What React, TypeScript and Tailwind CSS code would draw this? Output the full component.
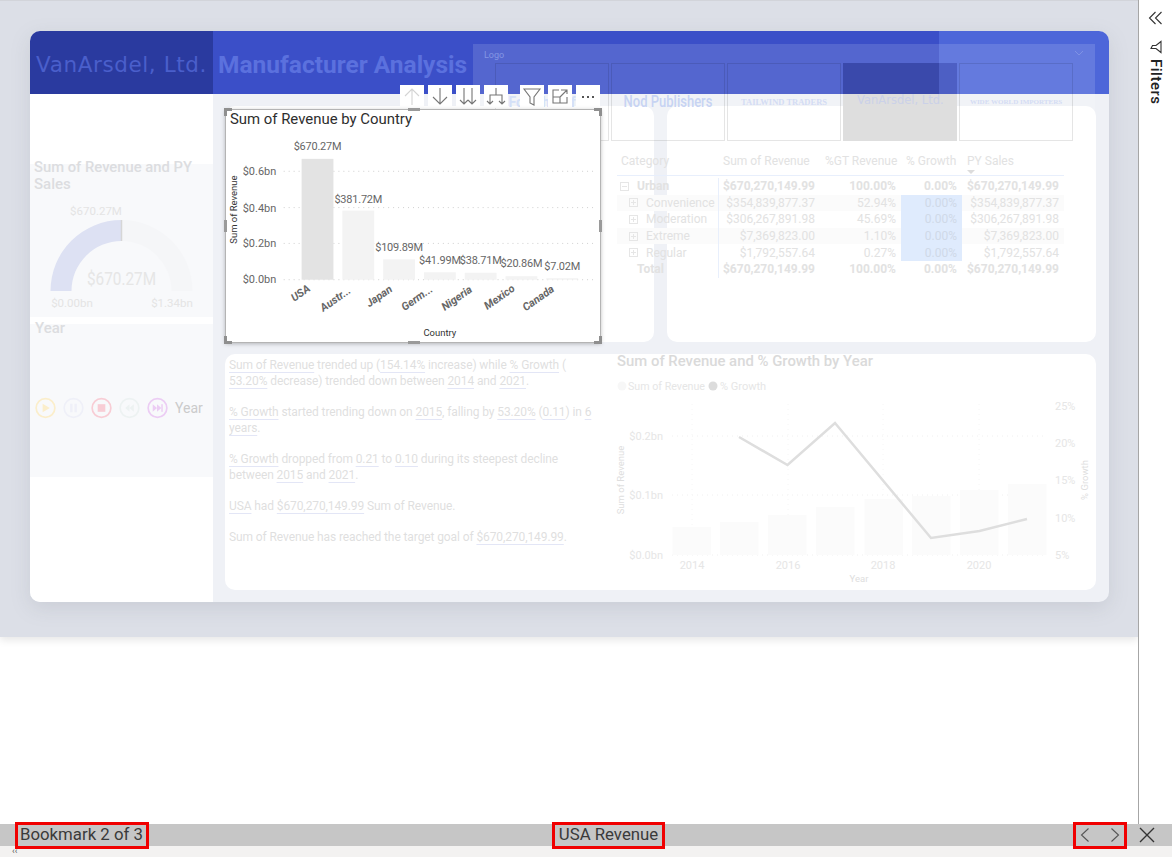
import React from 'react';

const countries = [
  { name: 'USA', x: 301, top: 158, fill: '#e3e3e3', label: '$670.27M', ly: 145, lx: 317, tx: 302, ty: 293 },
  { name: 'Austr...', x: 342, top: 210, fill: '#f3f3f3', label: '$381.72M', ly: 198, lx: 358, tx: 337, ty: 299 },
  { name: 'Japan', x: 383, top: 259, fill: '#f3f3f3', label: '$109.89M', ly: 247, lx: 399, tx: 381, ty: 296 },
  { name: 'Germ...', x: 424, top: 272, fill: '#f3f3f3', label: '$41.99M', ly: 260, lx: 440, tx: 419, ty: 298 },
  { name: 'Nigeria', x: 465, top: 272.5, fill: '#f3f3f3', label: '$38.71M', ly: 260, lx: 481, tx: 459, ty: 298 },
  { name: 'Mexico', x: 506, top: 276, fill: '#f3f3f3', label: '$20.86M', ly: 263, lx: 522, tx: 502, ty: 297 },
  { name: 'Canada', x: 547, top: 278, fill: '#f3f3f3', label: '$7.02M', ly: 266, lx: 563, tx: 541, ty: 298 },
];

const yearBars = [
  [672.5, 527], [720, 522], [768, 515], [816, 507], [864.5, 499], [912, 496], [960, 490], [1008, 484],
];

const matrixRows = [
  { name: 'Urban', rev: '$670,270,149.99', gt: '100.00%', growth: '0.00%', py: '$670,270,149.99', bold: true, icon: '-', depth: 0 },
  { name: 'Convenience', rev: '$354,839,877.37', gt: '52.94%', growth: '0.00%', py: '$354,839,877.37', icon: '+', depth: 1, stripe: true },
  { name: 'Moderation', rev: '$306,267,891.98', gt: '45.69%', growth: '0.00%', py: '$306,267,891.98', icon: '+', depth: 1 },
  { name: 'Extreme', rev: '$7,369,823.00', gt: '1.10%', growth: '0.00%', py: '$7,369,823.00', icon: '+', depth: 1, stripe: true },
  { name: 'Regular', rev: '$1,792,557.64', gt: '0.27%', growth: '0.00%', py: '$1,792,557.64', icon: '+', depth: 1 },
  { name: 'Total', rev: '$670,270,149.99', gt: '100.00%', growth: '0.00%', py: '$670,270,149.99', bold: true, depth: 0 },
];

function U({ children }: { children: React.ReactNode }) {
  return <span className="underline decoration-[#e3e6f6] underline-offset-[3px]">{children}</span>;
}

function SumChart() {
  return (
    <svg viewBox="225 109 376 233" className="block w-full h-full font-['Roboto',sans-serif]">
      <text x="229" y="123" fontSize="15" fill="#2e2e2e" textLength="183" lengthAdjust="spacingAndGlyphs">Sum of Revenue by Country</text>
      {[170.5, 207, 243, 279.5].map((y) => (
        <line key={y} x1="283" x2="597" y1={y} y2={y} stroke="#cfcfcf" strokeWidth="1" strokeDasharray="1 4" />
      ))}
      {[['$0.6bn', 170], ['$0.4bn', 207], ['$0.2bn', 243], ['$0.0bn', 279]].map(([t, y]) => (
        <text key={t} x="275.5" y={Number(y) + 4} textAnchor="end" fontSize="11" fill="#666">{t}</text>
      ))}
      <text transform="translate(236 209) rotate(-90)" textAnchor="middle" fontSize="9.5" fill="#333">Sum of Revenue</text>
      {countries.map((c) => (
        <g key={c.name}>
          <rect x={c.x} y={c.top} width="32" height={279.5 - c.top} fill={c.fill} />
          <text x={c.lx} y={c.ly + 4} textAnchor="middle" fontSize="11" fill="#666" letterSpacing="-0.2">{c.label}</text>
          <text transform={`translate(${c.tx} ${c.ty + 3}) rotate(-35)`} textAnchor="middle" fontSize="11" fontWeight="700" fontStyle="italic" fill="#666">{c.name}</text>
        </g>
      ))}
      <text x="440" y="336" textAnchor="middle" fontSize="9.5" fill="#333">Country</text>
    </svg>
  );
}

function YearChart() {
  return (
    <svg viewBox="617 354 479 236" className="block w-[479px] h-[236px] shrink-0 overflow-visible font-['Roboto',sans-serif]">
      <text x="617" y="366" fontSize="15" fontWeight="500" fill="#dadada" textLength="256" lengthAdjust="spacingAndGlyphs">Sum of Revenue and % Growth by Year</text>
      <circle cx="622" cy="386" r="4.5" fill="#f7f7f7" />
      <text x="628" y="390" fontSize="11" fill="#e6e6e6" textLength="77" lengthAdjust="spacingAndGlyphs">Sum of Revenue</text>
      <circle cx="713" cy="386" r="4.5" fill="#dcdcdc" />
      <text x="720" y="390" fontSize="11" fill="#e6e6e6">% Growth</text>
      {[436, 495, 555].map((y) => (
        <line key={y} x1="672" x2="1046" y1={y} y2={y} stroke="#f0f0f0" strokeDasharray="1 4" />
      ))}
      {[692, 788, 883, 979].map((x) => (
        <line key={x} x1={x} x2={x} y1="404" y2="555" stroke="#f6f6f6" strokeDasharray="1 4" />
      ))}
      {yearBars.map(([x, y]) => (
        <rect key={x} x={x} y={y} width="38.5" height={555 - y} fill="#fbfbfb" />
      ))}
      <polyline points="739,437 787.5,465 835,423 931,538 979.5,531 1027,519" fill="none" stroke="#dedede" strokeWidth="2.5" />
      {[['$0.2bn', 436], ['$0.1bn', 495], ['$0.0bn', 555]].map(([t, y]) => (
        <text key={t} x="663" y={Number(y) + 4} textAnchor="end" fontSize="11" fill="#e6e6e6">{t}</text>
      ))}
      {[['25%', 406], ['20%', 443], ['15%', 480], ['10%', 518], ['5%', 555]].map(([t, y]) => (
        <text key={t} x="1055" y={Number(y) + 4} fontSize="11" fill="#e6e6e6">{t}</text>
      ))}
      {[['2014', 692], ['2016', 788], ['2018', 883], ['2020', 979]].map(([t, x]) => (
        <text key={t} x={x} y="569" textAnchor="middle" fontSize="11" fill="#e6e6e6">{t}</text>
      ))}
      <text x="859" y="582" textAnchor="middle" fontSize="9.5" fill="#dedede">Year</text>
      <text transform="translate(624 480) rotate(-90)" textAnchor="middle" fontSize="9.5" fill="#dedede">Sum of Revenue</text>
      <text transform="translate(1088 480) rotate(-90)" textAnchor="middle" fontSize="9.5" fill="#dedede">% Growth</text>
    </svg>
  );
}

function Gauge() {
  return (
    <svg viewBox="30 164 183 153" className="block w-[183px] h-[153px] overflow-visible font-['Roboto',sans-serif]">
      <text x="34" y="172" fontSize="15" fontWeight="500" fill="#dcdde0" textLength="158" lengthAdjust="spacingAndGlyphs">Sum of Revenue and PY</text>
      <text x="34" y="189" fontSize="15" fontWeight="500" fill="#dcdde0">Sales</text>
      <path d="M121.5 220 A71 71 0 0 1 192.5 291 L171.5 291 A50 50 0 0 0 121.5 241 Z" fill="#f5f6f8" />
      <path d="M50.5 291 A71 71 0 0 1 121.5 220 L121.5 241 A50 50 0 0 0 71.5 291 Z" fill="#dde1f3" />
      <line x1="121.5" x2="121.5" y1="220" y2="241" stroke="#d6d6d6" strokeWidth="1.5" />
      <text x="96" y="215" textAnchor="middle" fontSize="11.5" fill="#e4e4e4">$670.27M</text>
      <text x="87" y="285" fontSize="19" fill="#e6e6e6" textLength="69" lengthAdjust="spacingAndGlyphs">$670.27M</text>
      <text x="72" y="307" textAnchor="middle" fontSize="11.5" fill="#e4e4e4">$0.00bn</text>
      <text x="172" y="307" textAnchor="middle" fontSize="11.5" fill="#e4e4e4">$1.34bn</text>
    </svg>
  );
}

function PlayButton({ color, children }: { color: string; children: React.ReactNode }) {
  return (
    <svg viewBox="0 0 22 22" className="w-[21px] h-[22px] shrink-0">
      <circle cx="11" cy="11" r="9.8" fill="none" stroke={color} strokeWidth="1.8" />
      <g fill={color}>{children}</g>
    </svg>
  );
}

function ToolButton({ children, className = '' }: { children: React.ReactNode; className?: string }) {
  return (
    <div className={`w-6 h-[23px] bg-white flex items-center justify-center ${className}`}>
      <svg viewBox="0 0 24 23" className="w-6 h-[23px]" fill="none" stroke="#767676" strokeWidth="1.1">
        {children}
      </svg>
    </div>
  );
}

function Handle({ className }: { className: string }) {
  return <div className={`absolute bg-[#9a9a9a] ${className}`} />;
}

function Corner({ className }: { className: string }) {
  return <div className={`absolute w-[8px] h-[8px] border-[#8f8f8f] ${className}`} />;
}

function ExpandIcon({ kind }: { kind: string }) {
  return (
    <svg viewBox="0 0 9 9" className="w-[9px] h-[9px] shrink-0" fill="none" stroke="#e6e6e6">
      <rect x="0.5" y="0.5" width="8" height="8" />
      <line x1="2" x2="7" y1="4.5" y2="4.5" />
      {kind === '+' && <line x1="4.5" x2="4.5" y1="2" y2="7" />}
    </svg>
  );
}

export default function App() {
  return (
    <div className="relative w-[1172px] h-[857px] overflow-hidden bg-white flex flex-col font-['Roboto',sans-serif]">
      <div className="flex flex-1 min-h-0">
        <div className="w-[1138px] shrink-0">
          <div className="h-[637px] bg-[#dcdfe7] pt-[30px] pl-[30px] border-t border-[#d2d4da] shadow-[0_3px_8px_rgba(0,0,0,0.10)]">
            <div className="w-[1079px] h-[571px] rounded-[10px] overflow-hidden bg-[#eff1f6] shadow-[0_6px_20px_rgba(120,125,140,0.18)]">
              <div className="flex h-[63px]">
                <div className="w-[183px] bg-[#2a3a9f] flex items-center pl-[6px] pt-[5px]">
                  <span className="font-['DejaVu_Sans',sans-serif] text-[21.5px] tracking-[0.6px] text-[#4a5fcb] whitespace-nowrap">VanArsdel, Ltd.</span>
                </div>
                <div className="w-[726px] bg-[#3b4fc8] flex items-center pl-[5px] pt-[5px]">
                  <span className="text-[24.5px] font-bold text-[#5b71de] whitespace-nowrap">Manufacturer Analysis</span>
                </div>
                <div className="flex-1 bg-[#4d66d9]" />
              </div>
              <div className="flex h-[508px]">
                <div className="w-[183px] bg-white pt-[70px] shrink-0">
                  <div className="h-[153px] bg-[#f8f9fb]">
                    <Gauge />
                  </div>
                  <div className="h-[153px] mt-[7px] bg-[#f8f9fb] px-[5px] flex flex-col">
                    <div className="-mt-[4px] text-[15px] leading-[17px] text-[#dcdde0] font-medium">Year</div>
                    <div className="mt-[60px] flex items-center gap-[7px]">
                      <PlayButton color="#fbeecb"><path d="M8 6.5 L15.5 11 L8 15.5 Z" /></PlayButton>
                      <PlayButton color="#eff0f8"><rect x="7.5" y="6.5" width="2.5" height="9" /><rect x="12" y="6.5" width="2.5" height="9" /></PlayButton>
                      <PlayButton color="#f8cdd5"><rect x="7" y="7" width="8" height="8" /></PlayButton>
                      <PlayButton color="#edf2f2"><path d="M11 7 L6.5 11 L11 15 Z M15.5 7 L11 11 L15.5 15 Z" /></PlayButton>
                      <PlayButton color="#eccdf4"><path d="M6 7 L10.5 11 L6 15 Z M10.5 7 L15 11 L10.5 15 Z" /><rect x="15" y="7" width="1.5" height="8" /></PlayButton>
                      <span className="text-[14px] text-[#cbcbcb]">Year</span>
                    </div>
                  </div>
                </div>
                <div className="flex-1 pt-[12px] pl-[12px] pr-[13px] flex flex-col gap-[12px]">
                  <div className="flex gap-[13px] h-[236px] shrink-0">
                    <div className="flex-1 bg-white rounded-[10px]" />
                    <div className="flex-1 bg-white rounded-[10px]" />
                  </div>
                  <div className="h-[236px] shrink-0 bg-white rounded-[10px] flex">
                    <div className="w-[392px] shrink-0 pl-[4px] pt-[3px] text-[12px] leading-[16px] text-[#dfdfdf] tracking-[-0.1px]">
                      <p className="mb-[15px]"><U>Sum of Revenue</U> trended up (<U>154.14%</U> increase) while <U>% Growth</U> (<br /><U>53.20%</U> decrease) trended down between <U>2014</U> and <U>2021</U>.</p>
                      <p className="mb-[15px]"><U>% Growth</U> started trending down on <U>2015</U>, falling by <U>53.20%</U> (<U>0.11</U>) in <U>6</U><br /><U>years</U>.</p>
                      <p className="mb-[15px]"><U>% Growth</U> dropped from <U>0.21</U> to <U>0.10</U> during its steepest decline<br />between <U>2015</U> and <U>2021</U>.</p>
                      <p className="mb-[15px]"><U>USA</U> had <U>$670,270,149.99</U> Sum of Revenue.</p>
                      <p>Sum of Revenue has reached the target goal of <U>$670,270,149.99</U>.</p>
                    </div>
                    <YearChart />
                  </div>
                </div>
              </div>
            </div>
          </div>
        </div>
        <div className="flex-1 border-l border-[#a6a6a6] bg-white flex flex-col items-center pt-[10px]">
          <svg viewBox="0 0 16 16" className="w-4 h-4" fill="none" stroke="#333" strokeWidth="1.1">
            <path d="M7.5 2 L1.5 8 L7.5 14" />
            <path d="M13.5 2 L7.5 8 L13.5 14" />
          </svg>
          <svg viewBox="0 0 14 14" className="w-[14px] h-[14px] mt-[14px] rotate-90" fill="none" stroke="#333" strokeWidth="1.1">
            <path d="M1.5 2 H12.5 L8.5 7 V12 L5.5 10.5 V7 Z" />
          </svg>
          <span className="mt-[5px] text-[15px] font-medium leading-[20px] tracking-[0.5px] text-[#222] [writing-mode:vertical-rl]">Filters</span>
        </div>
      </div>

      <div className="relative z-10 h-[22px] shrink-0 bg-[#c6c6c6] flex items-center text-[16.8px] text-[#3a3a3a]">
        <div className="ml-[15px] w-[134px] h-[27px] shrink-0 border-[3px] border-[#f00000] flex items-center pl-[2px] whitespace-nowrap">Bookmark 2 of 3</div>
        <div className="ml-[403px] w-[113px] h-[27px] shrink-0 border-[3px] border-[#f00000] flex items-center justify-center whitespace-nowrap">USA Revenue</div>
        <div className="ml-[408px] w-[54px] h-[27px] shrink-0 border-[3px] border-[#f00000] flex items-center justify-between px-[2px]">
          <svg viewBox="0 0 14 16" className="w-[14px] h-4" fill="none" stroke="#555" strokeWidth="1.1"><path d="M10.5 1.5 L3.5 8 L10.5 14.5" /></svg>
          <svg viewBox="0 0 14 16" className="w-[14px] h-4" fill="none" stroke="#555" strokeWidth="1.1"><path d="M3.5 1.5 L10.5 8 L3.5 14.5" /></svg>
        </div>
        <svg viewBox="0 0 16 16" className="ml-[12px] w-4 h-4" fill="none" stroke="#333" strokeWidth="1.4"><path d="M1 1 L15 15 M15 1 L1 15" /></svg>
      </div>
      <div className="h-[11px] shrink-0 bg-[#f3f2f1] pl-[12px] text-[9px] leading-[11px] text-[#555]">‹‹</div>

      {/* slicer sits over header and cards */}
      <div className="absolute left-[473px] top-[44px] w-[622px] h-[97px] bg-white/[0.13] pt-[19px] pl-[22px]">
        <div className="absolute left-[11px] top-[5px] text-[9px] text-[#8496e4]">Logo</div>
        <svg viewBox="0 0 10 6" className="absolute right-[11px] top-[6px] w-[10px] h-[6px]" fill="none" stroke="#7f92e4"><path d="M1 1 L5 5 L9 1" /></svg>
        <div className="flex gap-[2px] h-[78px]">
          <div className="w-[114px] border border-black/10 flex items-center justify-center text-[14px] font-bold text-[#d4e0f8] whitespace-nowrap">Fourth Coffee</div>
          <div className="w-[114px] border border-black/10 flex items-center justify-center whitespace-nowrap">
            <span className="inline-block scale-y-[1.3] text-[13px] font-medium text-[#c7d3f3]">Nod Publishers</span>
          </div>
          <div className="w-[114px] border border-black/10 flex items-center justify-center font-['Liberation_Serif',serif] text-[8.5px] font-bold text-[#d4dcf4] whitespace-nowrap">TAILWIND TRADERS</div>
          <div className="w-[114px] flex flex-col bg-[#dedede] whitespace-nowrap">
            <div className="h-[31px] bg-[linear-gradient(90deg,#3a49ab_0,#3a49ab_84%,#4d5fc4_84%)]" />
            <div className="h-[47px] relative">
              <span className="absolute left-[14px] -top-[1px] font-['DejaVu_Sans',sans-serif] text-[11.5px] leading-[14px] text-[#cbd1e8]">VanArsdel, Ltd.</span>
            </div>
          </div>
          <div className="w-[114px] border border-black/10 flex items-center justify-center font-['Liberation_Serif',serif] text-[7px] font-bold text-[#d4dcf4] whitespace-nowrap">WIDE WORLD IMPORTERS</div>
        </div>
      </div>

      {/* matrix overlaps the two cards on the canvas */}
      <div className="absolute left-[617px] top-[153px] w-[447px] text-[12px] leading-[16px] text-[#e2e2e2]">
        <div className="grid grid-cols-[101px_102px_81px_61px_102px] h-[23px] items-start border-b border-[#e8effc] whitespace-nowrap relative">
          <div className="pl-[4px]">Category</div>
          <div className="pl-[5px]">Sum of Revenue</div>
          <div className="pl-[5px]">%GT Revenue</div>
          <div className="pl-[5px]">% Growth</div>
          <div className="pl-[5px]">PY Sales</div>
          <div className="absolute left-[350px] bottom-[1px] border-x-[4px] border-t-[4px] border-x-transparent border-t-[#dcdcdc]" />
        </div>
        <div className="mt-[2px] relative">
          <div className="absolute left-[101px] top-0 bottom-0 w-px bg-[#e8effc]" />
          {matrixRows.map((r) => (
            <div key={r.name} className={`grid grid-cols-[101px_102px_81px_61px_102px] h-[16.6px] items-center whitespace-nowrap ${r.stripe ? 'bg-[#fbfbfb]' : ''} ${r.bold ? 'font-bold' : ''}`}>
              <div className={`flex items-center gap-[8px] ${r.depth ? 'pl-[12px]' : 'pl-[3px]'}`}>
                {r.icon ? <ExpandIcon kind={r.icon} /> : <span className="w-[9px]" />}
                <span>{r.name}</span>
              </div>
              <div className="text-right pr-[5px]">{r.rev}</div>
              <div className="text-right pr-[5px]">{r.gt}</div>
              <div className={`text-right pr-[5px] h-full flex items-center justify-end ${!r.bold ? 'bg-[#dfebfd] text-[#cfd9e8]' : ''}`}>{r.growth}</div>
              <div className="text-right pr-[5px]">{r.py}</div>
            </div>
          ))}
        </div>
      </div>

      {/* visual header over the selected chart */}
      <div className="absolute left-[400px] top-[85px] flex">
        <ToolButton><path d="M12 20 V4 M5 11 L12 4 L19 11" stroke="#d4d4d4" /></ToolButton>
        <ToolButton className="ml-[4px]"><path d="M12 3 V19 M5 12 L12 19 L19 12" /></ToolButton>
        <ToolButton className="ml-[4px]"><path d="M8 3 V19 M4 15 L8 19 L12 15 M16 3 V19 M12 15 L16 19 L20 15" /></ToolButton>
        <ToolButton className="ml-[4px]"><path d="M12 3 V10 M6 19 V10 H18 V19 M3 16 L6 19 L9 16 M15 16 L18 19 L21 16" /></ToolButton>
        <ToolButton className="ml-[12px]"><path d="M4 4 H20 L14 12 V20 L10 18 V12 Z" /></ToolButton>
        <ToolButton className="ml-[4px]"><path d="M11 5 H5 V18 H19 V12 M13 5 H19 V9 M19 5 L12 12 M5 12 H12 V18" /></ToolButton>
        <div className="ml-[4px] w-6 h-[23px] bg-white flex items-center justify-center gap-[3px]">
          <span className="w-[2px] h-[2px] bg-[#555]" />
          <span className="w-[2px] h-[2px] bg-[#555]" />
          <span className="w-[2px] h-[2px] bg-[#555]" />
        </div>
      </div>

      {/* selected chart in focus */}
      <div className="absolute left-[225px] top-[109px] w-[376px] h-[234px] bg-white border border-[#b4b4b4] shadow-[0_1px_4px_rgba(0,0,0,0.25)]">
        <SumChart />
        <Corner className="-left-[2px] -top-[2px] border-l-[3px] border-t-[3px]" />
        <Corner className="-right-[2px] -top-[2px] border-r-[3px] border-t-[3px]" />
        <Corner className="-left-[2px] -bottom-[2px] border-l-[3px] border-b-[3px]" />
        <Corner className="-right-[2px] -bottom-[2px] border-r-[3px] border-b-[3px]" />
        <Handle className="left-[182px] -top-[2px] w-[12px] h-[3px]" />
        <Handle className="left-[182px] -bottom-[2px] w-[12px] h-[3px]" />
        <Handle className="-left-[2px] top-[110px] w-[3px] h-[12px]" />
        <Handle className="-right-[2px] top-[110px] w-[3px] h-[12px]" />
      </div>
    </div>
  );
}
